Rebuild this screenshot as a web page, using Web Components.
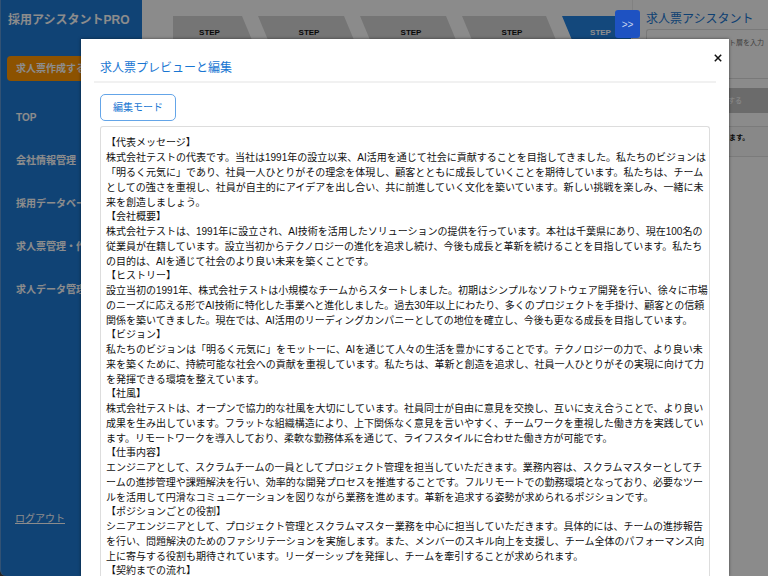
<!DOCTYPE html>
<html lang="ja">
<head>
<meta charset="utf-8">
<meta name="viewport" content="width=device-width, initial-scale=1">
<title>採用アシスタントPRO</title>
<style>
  html, body { margin: 0; height: 100%; }
  body {
    overflow: hidden;
    background: #444;
    color: #111;
    font: 10px/15px "Liberation Sans", "Noto Sans CJK JP", sans-serif;
  }
</style>
</head>
<body>
<recruit-app></recruit-app>

<script>
const define = (name, html, setup) => {
  const template = document.createElement('template');
  template.innerHTML = html;
  customElements.define(name, class extends HTMLElement {
    constructor() {
      super();
      this.attachShadow({ mode: 'open' }).append(template.content.cloneNode(true));
    }
    connectedCallback() { if (setup) setup(this, this.shadowRoot); }
  });
};

define('nav-link', `
  <style>
    :host { display: block; }
    a { color: #fff; font-weight: 700; text-decoration: none; white-space: nowrap; }
    :host([quiet]) a { font-weight: 400; text-decoration: underline; }
    :host([primary]) a {
      display: block; padding: 5px 9px; overflow: hidden;
      border-radius: 4px; background: #ff9500;
    }
  </style>
  <a href="#"><slot></slot></a>
`);

define('app-sidebar', `
  <style>
    :host {
      display: flex; flex-direction: column; box-sizing: border-box;
      width: 142px; flex: none; padding: 10px 7px 0 6px;
      border-left: 1px solid #5b96d4; border-bottom-left-radius: 6px;
      background: #1e7ad6; color: #fff;
    }
    h1 { margin: 0 0 26px 1px; font-size: 12px; line-height: 20px; white-space: nowrap; }
    nav { display: flex; flex-direction: column; gap: 28px; padding: 29px 0 0 9px; }
    footer { margin-top: auto; padding: 0 0 50px 8px; }
  </style>
  <h1>採用アシスタントPRO</h1>
  <nav-link primary>求人票作成する</nav-link>
  <nav>
    <nav-link>TOP</nav-link>
    <nav-link>会社情報管理</nav-link>
    <nav-link>採用データベース</nav-link>
    <nav-link>求人票管理・作成</nav-link>
    <nav-link>求人データ管理</nav-link>
  </nav>
  <footer><nav-link quiet>ログアウト</nav-link></footer>
`);

define('step-item', `
  <style>
    :host {
      display: block; box-sizing: border-box; height: 48px;
      padding: 9px 0 0 6px; text-align: center; font-size: 8px; font-weight: 700;
      background: #d6d6d6; color: #111;
      clip-path: polygon(0 0, calc(100% - 10px) 0, 100% 50%, calc(100% - 10px) 100%, 0 100%, 10px 50%);
    }
    :host([first]) {
      padding: 9px 6px 0 0;
      clip-path: polygon(0 0, calc(100% - 10px) 0, 100% 50%, calc(100% - 10px) 100%, 0 100%);
    }
    :host([active]) {
      padding-left: 8px; background: #2483e2; color: #fff;
      clip-path: polygon(0 0, 100% 0, 100% 100%, 0 100%, 10px 50%);
    }
  </style>
  <slot></slot>
`);

define('step-list', `
  <style>
    :host {
      display: grid; grid-template-columns: 79fr 96fr 96fr 94fr 69fr;
      gap: 6px; padding: 16px 1px 0 31px;
    }
  </style>
  <step-item first>STEP</step-item>
  <step-item>STEP</step-item>
  <step-item>STEP</step-item>
  <step-item>STEP</step-item>
  <step-item active>STEP</step-item>
`);

define('assistant-panel', `
  <style>
    :host {
      display: flex; flex-direction: column; position: relative; box-sizing: border-box;
      width: 136px; flex: none; padding: 9px 0 0 13px; border-left: 1px solid #ececec;
    }
    h2 { margin: 0; font-size: 12px; line-height: 20px; font-weight: 400; color: #1976d2; white-space: nowrap; }
    textarea {
      box-sizing: border-box; width: 100%; height: 50px; margin: 0; padding: 5px 4px;
      border: 1px solid #ddd; border-right: 0; border-radius: 3px 0 0 3px;
      background: transparent; resize: none; text-align: right;
      font: inherit; font-size: 7px; line-height: 15px;
    }
    textarea::placeholder { color: #757575; opacity: 1; }
    .generate {
      height: 25px; margin: 9px 0 13px; padding: 0; border: 0;
      background: #c4c4c4; color: #fff; font: inherit; font-size: 7px;
    }
    p {
      box-sizing: border-box; height: 31px; margin: 0; padding: 3px 5px; overflow: hidden;
      border: 1px solid #e0e0e0; border-right: 0; background: #f8f8f8;
      font-size: 7px; font-weight: 700; white-space: nowrap;
    }
    .toggle {
      position: absolute; z-index: 3; left: -18px; top: 10px;
      width: 25px; height: 28px; padding: 0; border: 0; border-radius: 3px;
      background: #1e52c2; color: #c8d4ee; font: inherit;
    }
  </style>
  <h2>求人票アシスタント</h2>
  <textarea aria-label="ターゲット層" placeholder="ターゲット層を入力"></textarea>
  <button class="generate" type="button">ターゲットを生成する</button>
  <p>生成した結果がここに出ます。</p>
  <button class="toggle" type="button" aria-label="パネルを開閉">&gt;&gt;</button>
`);

define('preview-section', `
  <style>
    :host { display: block; }
    h3 { margin: 0; font-size: 10px; line-height: 14px; font-weight: 400; }
    p { margin: 0; line-height: 15px; white-space: pre; }
  </style>
  <h3></h3><p><slot></slot></p>
`, (host, root) => { root.querySelector('h3').textContent = '【' + host.getAttribute('heading') + '】'; });

define('preview-modal', `
  <style>
    :host {
      display: flex; flex-direction: column; box-sizing: border-box;
      padding: 12px 19px 0; overflow: hidden; background: #fff; color: #111;
      box-shadow: 0 0 3px rgba(0, 0, 0, .5);
    }
    header {
      display: flex; justify-content: space-between; align-items: flex-start;
      margin: 0 -6px 11px; padding: 0 0 0 6px; height: 30px; border-bottom: 2px solid #f1f1f1;
    }
    h2 { margin: 7px 0 0; font-size: 12px; line-height: 20px; font-weight: 400; color: #1976d2; }
    .close { display: grid; place-items: center; width: 14px; height: 14px; margin-right: -9px; padding: 0; border: 0; background: none; }
    .edit {
      align-self: flex-start; flex: none; box-sizing: border-box; height: 27px; margin-bottom: 5px;
      padding: 0 12px; border: 1px solid #64a5e8; border-radius: 5px; background: #fff;
      color: #1976d2; font: inherit;
    }
    article { flex: 1; min-height: 0; padding: 9px 0 0 5px; border: 1px solid #ddd; border-bottom: 0; border-radius: 3px 3px 0 0; }
  </style>
  <header>
    <h2>求人票プレビューと編集</h2>
    <button class="close" type="button" aria-label="閉じる">
      <svg width="8" height="8" viewBox="0 0 8 8"><path d="M.8.8l6.4 6.4M7.2.8L.8 7.2" stroke="#111" stroke-width="1.5"/></svg>
    </button>
  </header>
  <button class="edit" type="button">編集モード</button>
  <article><slot></slot></article>
`);

define('recruit-app', `
  <style>
    :host { display: flex; position: relative; height: 100vh; overflow: hidden; }
    main { flex: 1; min-width: 0; background: #fdfdfd; }
    assistant-panel { background: #fdfdfd; }
    .backdrop {
      position: absolute; inset: 0; z-index: 2; display: grid;
      box-sizing: border-box; padding: 39px 39px 0 81px; background: rgba(0, 0, 0, .45);
    }
    preview-modal { min-width: 0; min-height: 0; }
  </style>
  <app-sidebar></app-sidebar>
  <main><step-list></step-list></main>
  <assistant-panel></assistant-panel>
  <div class="backdrop">
    <preview-modal role="dialog" aria-label="求人票プレビューと編集">
      <preview-section heading="代表メッセージ">株式会社テストの代表です。当社は1991年の設立以来、AI活用を通じて社会に貢献することを目指してきました。私たちのビジョンは
「明るく元気に」であり、社員一人ひとりがその理念を体現し、顧客とともに成長していくことを期待しています。私たちは、チーム
としての強さを重視し、社員が自主的にアイデアを出し合い、共に前進していく文化を築いています。新しい挑戦を楽しみ、一緒に未
来を創造しましょう。</preview-section>
      <preview-section heading="会社概要">株式会社テストは、1991年に設立され、AI技術を活用したソリューションの提供を行っています。本社は千葉県にあり、現在100名の
従業員が在籍しています。設立当初からテクノロジーの進化を追求し続け、今後も成長と革新を続けることを目指しています。私たち
の目的は、AIを通じて社会のより良い未来を築くことです。</preview-section>
      <preview-section heading="ヒストリー">設立当初の1991年、株式会社テストは小規模なチームからスタートしました。初期はシンプルなソフトウェア開発を行い、徐々に市場
のニーズに応える形でAI技術に特化した事業へと進化しました。過去30年以上にわたり、多くのプロジェクトを手掛け、顧客との信頼
関係を築いてきました。現在では、AI活用のリーディングカンパニーとしての地位を確立し、今後も更なる成長を目指しています。</preview-section>
      <preview-section heading="ビジョン">私たちのビジョンは「明るく元気に」をモットーに、AIを通じて人々の生活を豊かにすることです。テクノロジーの力で、より良い未
来を築くために、持続可能な社会への貢献を重視しています。私たちは、革新と創造を追求し、社員一人ひとりがその実現に向けて力
を発揮できる環境を整えています。</preview-section>
      <preview-section heading="社風">株式会社テストは、オープンで協力的な社風を大切にしています。社員同士が自由に意見を交換し、互いに支え合うことで、より良い
成果を生み出しています。フラットな組織構造により、上下関係なく意見を言いやすく、チームワークを重視した働き方を実践してい
ます。リモートワークを導入しており、柔軟な勤務体系を通じて、ライフスタイルに合わせた働き方が可能です。</preview-section>
      <preview-section heading="仕事内容">エンジニアとして、スクラムチームの一員としてプロジェクト管理を担当していただきます。業務内容は、スクラムマスターとしてチ
ームの進捗管理や課題解決を行い、効率的な開発プロセスを推進することです。フルリモートでの勤務環境となっており、必要なツー
ルを活用して円滑なコミュニケーションを図りながら業務を進めます。革新を追求する姿勢が求められるポジションです。</preview-section>
      <preview-section heading="ポジションごとの役割">シニアエンジニアとして、プロジェクト管理とスクラムマスター業務を中心に担当していただきます。具体的には、チームの進捗報告
を行い、問題解決のためのファシリテーションを実施します。また、メンバーのスキル向上を支援し、チーム全体のパフォーマンス向
上に寄与する役割も期待されています。リーダーシップを発揮し、チームを牽引することが求められます。</preview-section>
      <preview-section heading="契約までの流れ"></preview-section>
    </preview-modal>
  </div>
`);
</script>
</body>
</html>
